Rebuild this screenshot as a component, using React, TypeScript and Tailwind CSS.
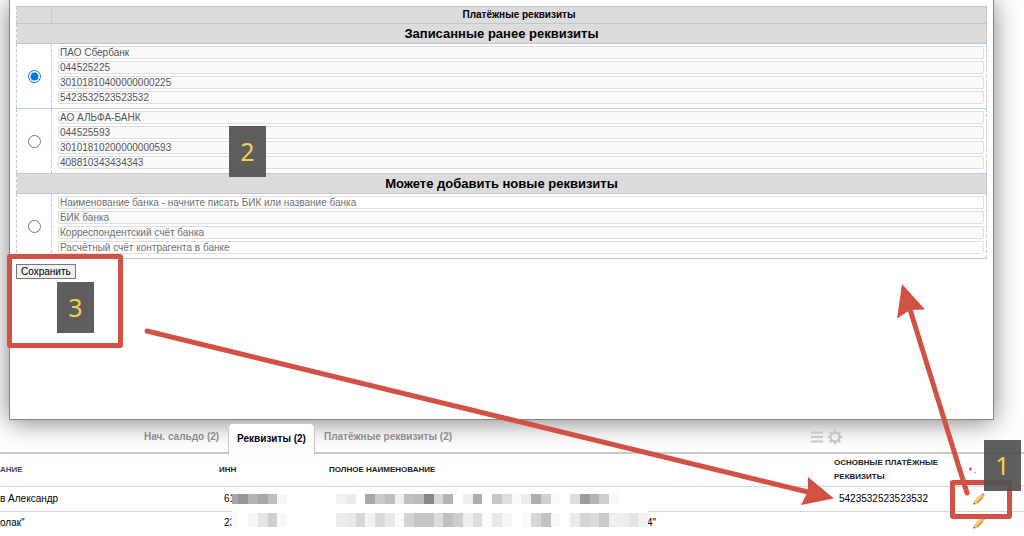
import { useState } from "react";

type Bank = { label: string; fields: string[] };

const SAVED: Bank[] = [
  { label: "ПАО Сбербанк", fields: ["ПАО Сбербанк", "044525225", "30101810400000000225", "5423532523523532"] },
  { label: "АО АЛЬФА-БАНК", fields: ["АО АЛЬФА-БАНК", "044525593", "30101810200000000593", "408810343434343"] },
];

const NEW_FIELDS = [
  { placeholder: "Наименование банка - начните писать БИК или название банка", readOnly: false },
  { placeholder: "БИК банка", readOnly: true },
  { placeholder: "Корреспондентский счёт банка", readOnly: true },
  { placeholder: "Расчётный счёт контрагента в банке", readOnly: false },
];

const CELL = 9.75;
const MOSAICS = [
  { x: 228.5, y: 494, h: 10, shades: ["a6", "96", "b4", "a9", "bf", "f6"] },
  { x: 228.5, y: 513, h: 14, shades: ["f9", "ff", "f6", "e4", "cf", "f8"] },
  {
    x: 336, y: 494, h: 10,
    shades: ["f2", "eb", "ff", "a8", "c9", "bd", "ee", "bf", "bb", "88", "d8", "b3", "ff", "ee", "ae", "ff", "c6", "de", "fa", "ec", "af", "cf", "fa", "ff", "dc", "9c", "b6", "cf", "f8"],
  },
  {
    x: 336, y: 513, h: 14,
    shades: ["eb", "e8", "d6", "f2", "da", "e8", "fa", "d4", "c6", "c4", "dc", "c1", "cf", "ee", "de", "ff", "e8", "f6", "ff", "fa", "d6", "c4", "f8", "ff", "eb", "d4", "dc", "c9", "ee", "ee", "e4", "f2"],
  },
];

function Field({ value, placeholder, readOnly }: { value?: string; placeholder?: string; readOnly: boolean }) {
  return (
    <input
      type="text"
      aria-label={placeholder ?? value}
      defaultValue={value}
      placeholder={placeholder}
      readOnly={readOnly}
      className={`block h-[13px] w-full rounded-xs border border-[#dedede] px-px text-[10px] leading-[11px] text-[#555] placeholder:text-[#707070] ${readOnly ? "bg-[#fafafa]" : "bg-white"}`}
    />
  );
}

function SectionRow({ children }: { children: string }) {
  return (
    <tr className="h-[20px] border-y border-[#bcc8d0] bg-[#dcdcdc]">
      <th colSpan={2} className="p-0 text-center text-[13px] leading-[18px] font-bold">
        {children}
      </th>
    </tr>
  );
}

function Pencil() {
  return (
    <svg viewBox="0 0 12 12" className="block size-3" aria-hidden="true">
      <path d="M0.8 11.2 L1.6 7.6 L7.4 1.8 L10.2 4.6 L4.4 10.4 Z" fill="#f2a92a" />
      <path d="M2.2 7.8 L7.8 2.2 L9 3.3 L3.3 9 Z" fill="#ffd76a" />
      <path d="M3.9 10.2 L9.7 4.4 L10.2 4.8 L4.4 10.6 Z" fill="#a8660f" />
      <path d="M7.4 1.8 L8.4 0.9 L11.1 3.6 L10.2 4.6 Z" fill="#c3c8cf" />
      <path d="M8.4 0.9 Q9.6 -0.2 11 1 Q12.2 2.3 11.1 3.6 Z" fill="#e58373" />
      <path d="M0.8 11.2 L1.6 7.6 L4.4 10.4 Z" fill="#ecd3ae" />
      <path d="M0.4 11.6 L1 9.6 L2.5 11 Z" fill="#3b3128" />
    </svg>
  );
}

function EditButton() {
  return (
    <button type="button" aria-label="Изменить" className="block">
      <Pencil />
    </button>
  );
}

function Badge({ children, className }: { children: string; className: string }) {
  return (
    <div
      className={`absolute z-30 flex h-[51px] w-[37px] items-center justify-center bg-[#545250]/93 font-['Noto_Sans',sans-serif] text-[25px] leading-none text-[#f4cf56] ${className}`}
    >
      {children}
    </div>
  );
}

export default function App() {
  const [selected, setSelected] = useState("ПАО Сбербанк");
  const radio = (label: string) => (
    <td className="border-x border-dashed border-[#bcc8d4] p-0 pt-px align-middle">
      <input
        type="radio"
        name="bank"
        aria-label={label}
        checked={selected === label}
        onChange={() => setSelected(label)}
        className="mx-auto block size-[13px] accent-[#0078d7]"
      />
    </td>
  );

  return (
    <div className="relative h-screen overflow-hidden bg-white font-['Liberation_Sans',Arial,sans-serif] text-black">
      <section className="relative mr-[30px] ml-[9px] min-h-[420px] border border-t-0 border-[#858585] bg-white px-[6px] pt-[6px] shadow-[0_2px_24px_rgba(0,0,0,0.5)]">
        <table className="w-full table-fixed border-collapse border-x border-dashed border-[#bcc8d4]">
          <colgroup>
            <col className="w-[35px]" />
            <col />
          </colgroup>
          <thead>
            <tr className="h-[17px] border-y border-[#bcc8d0] bg-[#dcdcdc]">
              <th className="border-r border-dashed border-[#bcc8d4] p-0" aria-label="Выбор" />
              <th className="p-0 text-center text-[10px] leading-[14px] font-bold">Платёжные реквизиты</th>
            </tr>
          </thead>
          <tbody>
            <SectionRow>Записанные ранее реквизиты</SectionRow>
            {SAVED.map((bank) => (
              <tr key={bank.label} className="border-b border-[#c4ced6]">
                {radio(bank.label)}
                <td className="px-[2px] pt-[2px] pb-[4px] pl-[6px]">
                  <div className="flex flex-col gap-[2px]">
                    {bank.fields.map((value) => (
                      <Field key={value} value={value} readOnly />
                    ))}
                  </div>
                </td>
              </tr>
            ))}
            <SectionRow>Можете добавить новые реквизиты</SectionRow>
            <tr className="border-b border-[#bcc8d0]">
              {radio("Новые реквизиты")}
              <td className="px-[2px] pt-[2px] pb-[4px] pl-[6px]">
                <div className="flex flex-col gap-[2px]">
                  {NEW_FIELDS.map((field) => (
                    <Field key={field.placeholder} {...field} />
                  ))}
                </div>
              </td>
            </tr>
          </tbody>
        </table>
        <button type="button" className="mt-[5px] block h-[15px] border border-[#777] bg-[#efefef] px-1 text-[10px] leading-[13px]">
          Сохранить
        </button>
      </section>

      <nav className="relative flex h-[34px] items-end border-b-2 border-[#c9c9c9] pl-[135px] text-[10px] font-bold text-[#8b8b8b]">
        <a href="#saldo" className="px-[9px] pb-[7px] leading-4">Нач. сальдо (2)</a>
        <a href="#details" className="-mb-[2px] flex h-[31px] items-center rounded-t-[5px] border border-b-0 border-[#c9c9c9] bg-white px-2 pb-[2px] text-[#000018]">
          Реквизиты (2)
        </a>
        <a href="#payment" className="px-[9px] pb-[7px] leading-4">Платёжные реквизиты (2)</a>
        <div className="mr-[181px] ml-auto flex items-center gap-1 pb-[7px] text-[#c6c8c8]">
          <button type="button" aria-label="Список">
            <svg viewBox="0 0 12 12" className="block size-3" stroke="currentColor" strokeWidth="2" aria-hidden="true">
              <path d="M0 1.5H12M0 6H12M0 10.5H12" />
            </svg>
          </button>
          <button type="button" aria-label="Настройки">
            <svg viewBox="0 0 16 16" className="block size-4" fill="none" stroke="currentColor" aria-hidden="true">
              <circle cx="8" cy="8" r="4.5" strokeWidth="2.4" />
              <path d="M8 0.8V3M8 13V15.2M0.8 8H3M13 8H15.2M2.9 2.9L4.5 4.5M11.5 11.5L13.1 13.1M2.9 13.1L4.5 11.5M11.5 4.5L13.1 2.9" strokeWidth="2.6" />
            </svg>
          </button>
        </div>
      </nav>

      <table className="w-full table-fixed border-collapse text-left text-[10px] leading-[14px]">
        <colgroup>
          <col className="w-[219px]" />
          <col className="w-[110px]" />
          <col />
          <col className="w-[134px]" />
          <col className="w-[56px]" />
        </colgroup>
        <thead className="text-[8px] leading-[14px] text-[#222]">
          <tr className="h-[32px] border-b border-[#d6d6d6]">
            <th className="p-0 text-[#4a4468]">АНИЕ</th>
            <th className="p-0">ИНН</th>
            <th className="p-0">ПОЛНОЕ НАИМЕНОВАНИЕ</th>
            <th className="p-0 pr-6">ОСНОВНЫЕ ПЛАТЁЖНЫЕ РЕКВИЗИТЫ</th>
            <th className="p-0" aria-label="Действия">
              <svg viewBox="0 0 10 8" className="block h-2 w-[10px]" aria-hidden="true">
                <circle cx="2.5" cy="3" r="1.5" fill="#fa3c46" />
                <circle cx="7" cy="6.5" r="1" fill="#b4b4c4" />
              </svg>
            </th>
          </tr>
        </thead>
        <tbody>
          <tr className="h-[25px] border-b border-[#d6d6d6]">
            <td className="p-0">в Александр</td>
            <td className="p-0 pl-[5px]">61</td>
            <td className="p-0" />
            <td className="p-0 pl-[5px]">5423532523523532</td>
            <td className="p-0 pl-[5px]"><EditButton /></td>
          </tr>
          <tr className="h-[24px]">
            <td className="p-0">олак"</td>
            <td className="p-0 pl-[5px]">23</td>
            <td className="p-0 pr-[178px] text-right">4"</td>
            <td className="p-0" />
            <td className="p-0 pl-[5px]"><EditButton /></td>
          </tr>
        </tbody>
      </table>

      <svg width="1024" height="536" viewBox="0 0 1024 536" className="pointer-events-none absolute top-0 left-0 z-10" aria-hidden="true">
        <rect x="231.5" y="505" width="416.5" height="22" fill="#fff" />
        {MOSAICS.map((m) =>
          m.shades.map((shade, i) => {
            const left = Math.max(m.x + i * CELL, 231.5);
            return (
              <rect
                key={`${m.x}-${m.y}-${i}`}
                x={left}
                y={m.y}
                width={m.x + (i + 1) * CELL - left}
                height={m.h}
                fill={`#${shade}${shade}${shade}`}
                shapeRendering="crispEdges"
              />
            );
          }),
        )}
        <g stroke="#d15244" strokeWidth="5" strokeLinecap="round" fill="#d15244">
          <path d="M147 331L812 493" />
          <path d="M967 493L908 303" />
          <path d="M834 498.5L808 477V491L801 505Z" stroke="none" />
          <path d="M902 284L925 309.5L910 310L897 318.5Z" stroke="none" />
        </g>
      </svg>

      <div className="pointer-events-none absolute top-[254px] left-[7px] z-20 h-[94px] w-[116px] rounded-[3px] border-[5px] border-[#d15244]" />
      <div className="pointer-events-none absolute top-[480px] left-[950px] z-20 h-[39px] w-[62px] rounded-[3px] border-[5px] border-[#d15244]" />
      <Badge className="top-[126px] left-[229px]">2</Badge>
      <Badge className="top-[282px] left-[57px]">3</Badge>
      <Badge className="top-[440px] left-[984px]">1</Badge>
    </div>
  );
}
